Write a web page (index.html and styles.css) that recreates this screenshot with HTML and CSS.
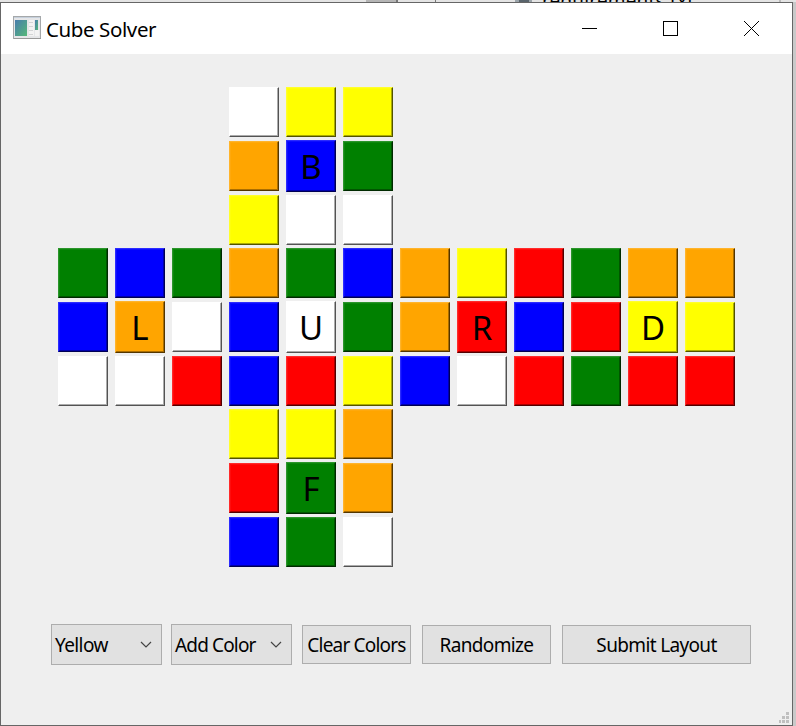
FILE: index.html
```
<!DOCTYPE html>
<html lang="en">
<head>
<meta charset="utf-8">
<title>Cube Solver</title>
<link rel="stylesheet" href="styles.css">
</head>
<body>
<div class="backdrop"><span class="tab"></span><span class="divider"></span><span class="file-icon"></span><span class="file-name">requirements.txt</span><span class="edge"></span></div>
<main class="window">
  <header class="titlebar">
    <svg class="app-icon" width="28" height="24" viewBox="0 0 28 24">
      <defs><linearGradient id="g" x2="1" y2="1"><stop stop-color="#477cad"/><stop offset="1" stop-color="#55b878"/></linearGradient></defs>
      <rect x=".5" y=".5" width="27" height="22" fill="#e5e6e8" stroke="#a5a8aa"/>
      <path d="M1 1.5h26" stroke="#c6d0dc"/>
      <rect x="2" y="4" width="12" height="16" fill="url(#g)"/>
      <path d="M16 4h5v16h-5zM22 14h4v6h-4z" fill="#f3f3f3"/>
      <path d="M16 6.500h4M16 10.500h4M16 14.500h4M16 18.500h4" stroke="#d2d4d5"/>
      <rect x="22" y="4" width="3" height="10" fill="url(#g)"/>
      <path d="M1 22.500h27" stroke="#999"/>
    </svg>
    <h1 class="title"><span>Cube Solver</span></h1>
    <svg class="controls" width="180" height="16" viewBox="0 0 180 16" fill="none" stroke="#000" shape-rendering="crispEdges">
      <path d="M1 7.500h15"/>
      <rect x="82.500" y=".5" width="14" height="14"/>
      <path d="M163 0l15 15M178 0l-15 15" shape-rendering="auto"/>
    </svg>
  </header>
  <section class="cube" id="cube"></section>
  <footer class="toolbar">
    <button class="control combo color"><span>Yellow</span><svg width="12" height="8" viewBox="0 0 12 8"><path d="M1 1l5 5 5-5" fill="none" stroke="#444" stroke-width="1.200"/></svg></button>
    <button class="control combo action"><span>Add Color</span><svg width="12" height="8" viewBox="0 0 12 8"><path d="M1 1l5 5 5-5" fill="none" stroke="#444" stroke-width="1.200"/></svg></button>
    <button class="control clear"><span>Clear Colors</span></button>
    <button class="control random"><span>Randomize</span></button>
    <button class="control submit"><span>Submit Layout</span></button>
  </footer>
  <svg class="grip" width="10" height="11" viewBox="0 0 10 11" fill="#bfbfbf"><path d="M7 0h3v3H7zM3 4h3v3H3zM7 4h3v3H7zM0 8h2v3H0zM3 8h3v3H3zM7 8h3v3H7z"/></svg>
</main>
<script src="cube.js"></script>
</body>
</html>
```
FILE: styles.css
```
* { box-sizing: border-box; }
body {
  margin: 0;
  width: 796px;
  height: 726px;
  overflow: hidden;
  background: #c9c9c9;
  color: #000;
  font-family: "Noto Sans", sans-serif;
}
.backdrop {
  display: flex;
  width: 796px;
  height: 2px;
  overflow: hidden;
  background: #e4e4e4;
}
.tab { flex: none; width: 32px; height: 2px; margin-left: 366px; background: #b5b5b5; border-right: 2px solid #777; }
.divider { flex: none; width: 1px; margin-left: 37px; background: #777; }
.file-icon { flex: none; width: 17px; margin-left: 79px; background: linear-gradient(90deg, #9ba4aa 4px, #59646c 4px 14px, #9ba4aa 14px); }
.file-name { flex: none; margin-left: 10px; font-size: 19px; line-height: 20px; margin-top: -9px; width: 152px; letter-spacing: .15px; }
.edge { flex: none; width: 2px; margin-left: 85px; background: #bbb; }
.window {
  display: flex;
  flex-direction: column;
  width: 793px;
  height: 724px;
  border: 1px solid #666;
  background: #efefef;
}
.titlebar {
  display: flex;
  align-items: center;
  height: 51px;
  padding-left: 12px;
  background: #fff;
}
.app-icon { margin-bottom: 1px; }
.title { width: 112px; margin: 0 0 0 5px; font-size: 20.5px; font-weight: 400; line-height: 28px; letter-spacing: -.4px; white-space: nowrap; }
.controls { margin-left: 423px; }
.cube {
  display: grid;
  grid-template-columns: repeat(12, 50px);
  grid-template-rows: 54px 54px 53px 54px 54px 53px 54px 54px 50px;
  column-gap: 7px;
  width: 677px;
  margin: 33px 0 0 57px;
}
.tile {
  width: 50px;
  height: 50px;
  border: 1px solid;
  border-color: rgb(255 255 255 / 17%) rgb(0 0 0 / 67%) rgb(0 0 0 / 67%) rgb(255 255 255 / 17%);
  box-shadow: inset -1px -1px rgb(0 0 0 / 33%), inset 1px 1px rgb(255 255 255 / 5%);
}
.center {
  height: 52px;
  margin-top: -1px;
  font-size: 33px;
  line-height: 52px;
  text-align: center;
}
.white { background: #fff; }
.yellow { background: #ff0; }
.orange { background: #ffa500; }
.blue { background: #00f; }
.green { background: #008000; }
.red { background: #f00; }
.toolbar {
  display: flex;
  align-items: center;
  height: 41px;
  margin: 57px 0 0 50px;
}
.control {
  display: flex;
  align-items: center;
  justify-content: center;
  height: 39px;
  padding: 0;
  border: 1px solid #adadad;
  background: #e1e1e1;
  color: #000;
  font: 19px/26px "Noto Sans", sans-serif;
  letter-spacing: -.65px;
  white-space: nowrap;
}
.combo { height: 41px; justify-content: space-between; padding: 0 9px 0 3px; }
.color { width: 111px; letter-spacing: -.6px; }
.action { width: 121px; margin-left: 9px; letter-spacing: -.85px; }
.clear { width: 109px; margin-left: 10px; letter-spacing: -.8px; }
.random { width: 129px; margin-left: 11px; }
.submit { width: 189px; margin-left: 11px; }
.grip { align-self: flex-end; margin: auto 3px 2px 0; }
```
FILE: cube.js
```
const palette = { W: "white", Y: "yellow", O: "orange", B: "blue", G: "green", R: "red" };
const rows = ["...WYY......", "...OBG......", "...YWW......", "GBGOGBOYRGOO", "BOWBWGORBRYY", "WWRBRYBWRGRR", "...YYO......", "...RGO......", "...BGW......"];
const labels = { "1,4": "B", "4,1": "L", "4,4": "U", "4,7": "R", "4,10": "D", "7,4": "F" };
const cube = document.getElementById("cube");
rows.forEach((row, r) => [...row].forEach((color, c) => {
  const cell = document.createElement("div");
  if (color !== ".") {
    cell.className = "tile " + palette[color];
    const label = labels[r + "," + c];
    if (label) {
      cell.classList.add("center");
      cell.textContent = label;
    }
  }
  cube.append(cell);
}));
```
